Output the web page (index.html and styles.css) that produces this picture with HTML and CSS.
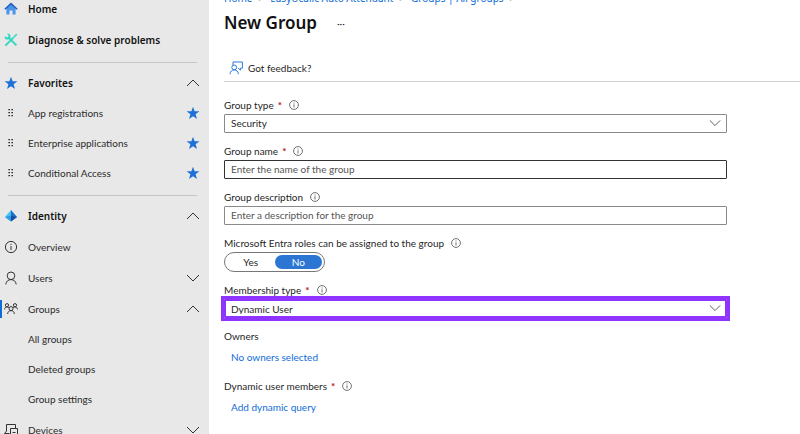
FILE: index.html
```
<!DOCTYPE html>
<html lang="en">
<head>
    <meta charset="UTF-8">
    <meta name="viewport" content="width=device-width, initial-scale=1.0">
    <title>New Group</title>
    <link rel="stylesheet" href="styles.css">
</head>
<body>
    <svg class="sprite" aria-hidden="true">
        <symbol id="info" viewBox="0 0 12 12"><circle cx="6" cy="6" r="5.3"/><path d="M6 5.2v3.8M6 3v1.2"/></symbol>
        <symbol id="up" viewBox="0 0 14 14"><path d="M1 10l6-6 6 6"/></symbol>
        <symbol id="down" viewBox="0 0 14 14"><path d="M1 4l6 6 6-6"/></symbol>
        <symbol id="star" viewBox="0 0 14 14"><path d="M7 .8l1.6 4.5h4.8L9.6 8.2l1.4 4.9L7 10.2l-4 2.9 1.4-4.9L.6 5.3h4.8z"/></symbol>
        <symbol id="grip" viewBox="0 0 14 14"><path d="M4.5 3h1.3v1.3H4.5zM7.5 3h1.3v1.3H7.5zM4.5 6h1.3v1.3H4.5zM7.5 6h1.3v1.3H7.5zM4.5 9h1.3v1.3H4.5zM7.5 9h1.3v1.3H7.5z"/></symbol>
    </svg>
    <div class="layout">
        <nav class="sidebar">
            <a class="item bold" href="#">
                <svg class="icon" viewBox="0 0 14 14"><path fill="#4a94ea" d="M2.4 6L7 2l4.6 4v6.6H8.5v-4h-3v4H2.4z"/><path fill="none" stroke="#1d5fbd" stroke-width="1.5" d="M.8 7.2L7 1.6l6.2 5.6"/></svg>
                <span>Home</span>
            </a>
            <a class="item bold" href="#">
                <svg class="icon" viewBox="0 0 14 14"><path fill="none" stroke="#2fd9c0" stroke-width="2" d="M3.8 3.8l8.6 8.6M1.4 12.6l8-8"/><path fill="none" stroke="#2fd9c0" stroke-width="1.6" d="M3.6 1.3A2.2 2.2 0 1 1 1.3 3.6M12.8 1.2L9.5 4.5"/></svg>
                <span>Diagnose &amp; solve problems</span>
            </a>
            <hr>
            <button class="item bold" type="button">
                <svg class="icon star"><use href="#star"/></svg>
                <span>Favorites</span>
                <svg class="icon line"><use href="#up"/></svg>
            </button>
            <a class="item sub" href="#">
                <svg class="icon"><use href="#grip"/></svg>
                <span>App registrations</span>
                <svg class="icon star"><use href="#star"/></svg>
            </a>
            <a class="item sub" href="#">
                <svg class="icon"><use href="#grip"/></svg>
                <span>Enterprise applications</span>
                <svg class="icon star"><use href="#star"/></svg>
            </a>
            <a class="item sub" href="#">
                <svg class="icon"><use href="#grip"/></svg>
                <span>Conditional Access</span>
                <svg class="icon star"><use href="#star"/></svg>
            </a>
            <hr>
            <button class="item bold" type="button">
                <svg class="icon" viewBox="0 0 14 14"><path fill="#42c3f2" d="M7 1L1 8l6 4.5z"/><path fill="#1f70c8" d="M7 1l6 7-6 4.5z"/><path fill="#1b4fa0" d="M7 12.5L13 8 7 6.5z"/><path fill="#2f9be4" d="M1 8l6-1.5v6z"/></svg>
                <span>Identity</span>
                <svg class="icon line"><use href="#up"/></svg>
            </button>
            <a class="item" href="#">
                <svg class="icon line" viewBox="0 0 14 14"><circle cx="7" cy="7" r="5.6"/><path d="M7 6v4M7 3.8V5"/></svg>
                <span>Overview</span>
            </a>
            <button class="item" type="button">
                <svg class="icon line" viewBox="0 0 14 14"><circle cx="7" cy="4.8" r="3.8"/><path d="M1.8 13.4c.3-3 2.4-4.8 5.2-4.8s4.9 1.8 5.2 4.8"/></svg>
                <span>Users</span>
                <svg class="icon line"><use href="#down"/></svg>
            </button>
            <button class="item active" type="button">
                <svg class="icon line" viewBox="0 0 14 14"><circle cx="3" cy="3.2" r="1.6"/><circle cx="11" cy="3.2" r="1.6"/><circle cx="7" cy="6.6" r="2"/><path d="M.6 7.4c.2-1.6 1-2.5 2.4-2.5 1 0 1.6.3 2 1M13.4 7.4c-.2-1.6-1-2.5-2.4-2.5-1 0-1.6.3-2 1M3.6 12c.2-2.2 1.5-3.4 3.4-3.4s3.2 1.2 3.4 3.4"/></svg>
                <span>Groups</span>
                <svg class="icon line"><use href="#up"/></svg>
            </button>
            <a class="item sub indent" href="#">All groups</a>
            <a class="item sub indent" href="#">Deleted groups</a>
            <a class="item sub indent" href="#">Group settings</a>
            <button class="item" type="button">
                <svg class="icon line" viewBox="0 0 14 14"><path d="M2.5 8V1.5h9V5M2.5 8l-2 2.5h5M6.5 5.5h7v6h-7zM4 12.9h5M8.5 9.5h3"/></svg>
                <span>Devices</span>
                <svg class="icon line"><use href="#down"/></svg>
            </button>
        </nav>

        <main class="content">
            <div class="breadcrumb">
                <a href="#">Home</a><i>&gt;</i><a href="#">EasyUcallc Auto Attendant</a><i>&gt;</i><a href="#">Groups | All groups</a><i>&gt;</i>
            </div>
            <header class="title">
                <h1>New Group</h1>
                <button class="more" type="button" aria-label="More">···</button>
            </header>
            <div class="toolbar">
                <button class="feedback" type="button">
                    <svg class="icon" viewBox="0 0 14 14"><path d="M4 4V1h9.4v6.2h-2v2L9.2 7.2"/><circle cx="5.2" cy="6.4" r="2.4"/><path d="M1 13.2c.3-2.8 1.8-4.3 4.2-4.3s3.9 1.5 4.2 4.3"/></svg>
                    Got feedback?
                </button>
            </div>
            <form class="form">
                <div class="field">
                    <div class="caption"><label for="group-type">Group type</label><b>*</b><svg class="info"><use href="#info"/></svg></div>
                    <div class="select">
                        <select id="group-type"><option>Security</option><option>Microsoft 365</option></select>
                        <svg class="arrow"><use href="#down"/></svg>
                    </div>
                </div>
                <div class="field">
                    <div class="caption"><label for="group-name">Group name</label><b>*</b><svg class="info"><use href="#info"/></svg></div>
                    <input class="focus" type="text" id="group-name" placeholder="Enter the name of the group">
                </div>
                <div class="field">
                    <div class="caption"><label for="group-description">Group description</label><svg class="info"><use href="#info"/></svg></div>
                    <input type="text" id="group-description" placeholder="Enter a description for the group">
                </div>
                <div class="field">
                    <div class="caption"><span id="roles">Microsoft Entra roles can be assigned to the group</span><svg class="info"><use href="#info"/></svg></div>
                    <div class="toggle" role="radiogroup" aria-labelledby="roles">
                        <label><input type="radio" name="roles" value="yes"><span>Yes</span></label>
                        <label><input type="radio" name="roles" value="no" checked><span>No</span></label>
                    </div>
                </div>
                <div class="field">
                    <div class="caption"><label for="membership-type">Membership type</label><b>*</b><svg class="info"><use href="#info"/></svg></div>
                    <div class="select highlight">
                        <select id="membership-type"><option>Dynamic User</option><option>Assigned</option></select>
                        <svg class="arrow"><use href="#down"/></svg>
                    </div>
                </div>
                <div class="picker">
                    <div class="caption">Owners</div>
                    <a href="#">No owners selected</a>
                </div>
                <div class="picker">
                    <div class="caption">Dynamic user members<b>*</b><svg class="info"><use href="#info"/></svg></div>
                    <a href="#">Add dynamic query</a>
                </div>
            </form>
        </main>
    </div>
</body>
</html>
```
FILE: styles.css
```
* {
    box-sizing: border-box;
}
body {
    margin: 0;
    height: 100vh;
    overflow: hidden;
    font-family: Lato, "Noto Sans", sans-serif;
    font-size: 10px;
    line-height: 16px;
    color: #1f1f1f;
    background-color: #fff;
}
button, input, select {
    font: inherit;
    color: inherit;
}
button {
    border: 0;
    background: none;
    cursor: pointer;
}
a {
    color: #0f6cd6;
    text-decoration: none;
}
.sprite {
    display: none;
}
.layout {
    display: flex;
    height: 100%;
}

/* sidebar */
.sidebar {
    flex: 0 0 209px;
    margin-top: -7px;
    background-color: #e8e8e8;
}
.item {
    display: flex;
    align-items: center;
    width: 100%;
    height: 31px;
    padding: 0 9px 0 4px;
    gap: 10px;
    color: #2b2b2b;
    text-align: left;
}
.item span {
    flex: 1;
}
.bold {
    font-family: "Noto Sans", "Open Sans", sans-serif;
    font-weight: 600;
    color: #111;
}
.sub {
    height: 30px;
}
.indent {
    padding-left: 28px;
}
.active {
    background: linear-gradient(#0f6cd6, #0f6cd6) no-repeat left center / 2px 18px;
}
.sidebar hr {
    height: 1px;
    margin: 7px 12px 4px 8px;
    border: 0;
    background-color: #c4c6c5;
}
.icon {
    flex: none;
    width: 14px;
    height: 14px;
}
.star {
    fill: #1f71d6;
}
.line {
    fill: none;
    stroke: #333;
}

/* main blade */
.content {
    flex: 1;
    margin-top: -10px;
    padding-left: 15px;
}
.breadcrumb {
    height: 16px;
    font-family: "Noto Sans", "Open Sans", sans-serif;
}
.breadcrumb i {
    margin: 0 6px;
    font-style: normal;
    color: #666;
}
.title {
    display: flex;
    align-items: center;
    gap: 14px;
    height: 33px;
}
h1 {
    margin: 0;
    font-family: "Noto Sans", "Open Sans", sans-serif;
    font-size: 17px;
    font-weight: 600;
    color: #111;
}
.toolbar {
    height: 43px;
    padding-top: 21px;
    border-bottom: 1px solid #d2d2d2;
}
.feedback {
    display: flex;
    align-items: center;
    gap: 5px;
    padding: 0 5px;
}
.feedback .icon {
    fill: none;
    stroke: #2f7bd8;
}
.form {
    max-width: 503px;
    padding-top: 15px;
}
.field {
    margin-bottom: 10px;
}
.caption {
    display: flex;
    align-items: center;
    height: 17px;
    padding-bottom: 2px;
}
.caption b {
    margin-left: 4px;
    color: #b3121d;
}
.info {
    width: 10px;
    height: 10px;
    margin-left: 7px;
    fill: none;
    stroke: #555;
}
.form input[type="text"], .form select {
    display: block;
    width: 100%;
    height: 19px;
    padding: 0 6px 2px;
    border: 1px solid #8a8a8a;
    border-radius: 1px;
    background-color: #fff;
    appearance: none;
}
.form input::placeholder {
    color: #555;
}
.form input.focus {
    border-color: #333;
}
.select {
    position: relative;
}
.arrow {
    position: absolute;
    top: 3px;
    right: 6px;
    width: 12px;
    height: 12px;
    fill: none;
    stroke: #444;
    pointer-events: none;
}
.highlight {
    outline: 3px solid #8f33ff;
}
.form .highlight select {
    padding: 0 5px 2px;
    border: 2px solid #8f33ff;
}
.toggle {
    display: flex;
    width: 101px;
    height: 20px;
    padding: 2px;
    border: 1px solid #777;
    border-radius: 10px;
}
.toggle label {
    flex: 1;
    line-height: 14px;
    text-align: center;
    border-radius: 8px;
}
.toggle input {
    position: absolute;
    opacity: 0;
}
.toggle label:has(input:checked) {
    color: #fff;
    background-color: #2a76d2;
}
.picker {
    height: 50px;
}
.picker a {
    display: block;
    margin-top: 4px;
    padding-left: 7px;
}
```
